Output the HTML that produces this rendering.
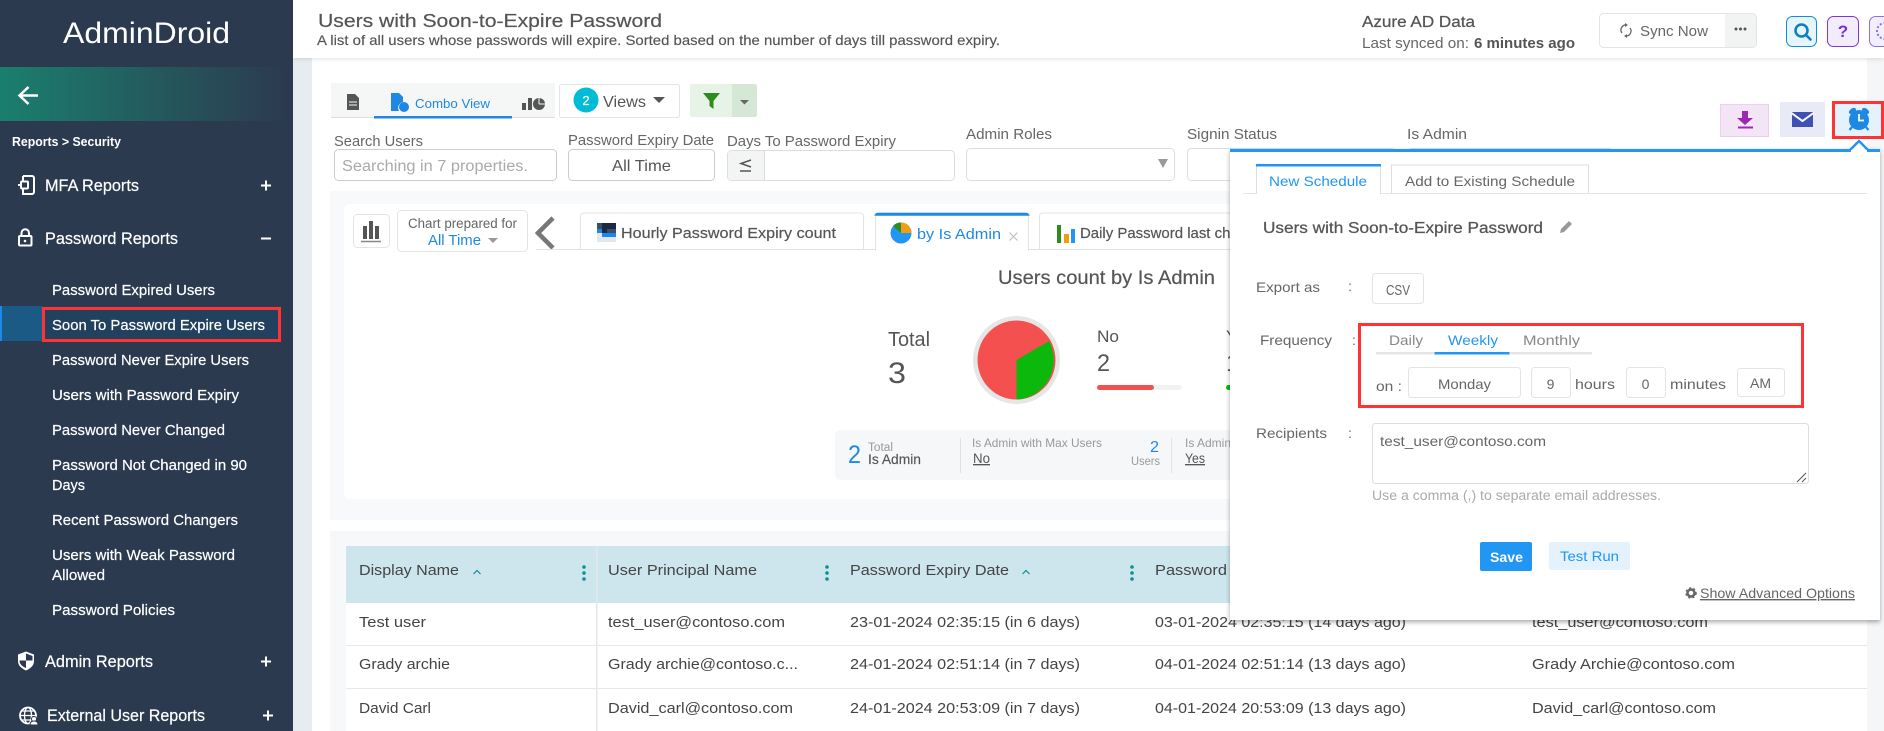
<!DOCTYPE html>
<html lang="en"><head><meta charset="utf-8"><title>Users with Soon-to-Expire Password</title>
<style>
html,body{margin:0;padding:0;background:#fff;width:1884px;height:731px;overflow:hidden}
svg{display:block;font-family:"Liberation Sans",Arial,sans-serif}
text{white-space:pre}
.n{font-size:17px;fill:#fff;stroke:#fff;stroke-width:.2}
.s{font-size:15px;fill:#fff;stroke:#fff;stroke-width:.2}
.l{font-size:15px;fill:#666}
.t{font-size:15px;fill:#444}
.p{font-size:14px;fill:#666}
.b{fill:#2196f3}
.box{fill:#fff;stroke:#e4e4e4;stroke-width:1}
</style></head><body>
<svg width="1884" height="731" viewBox="0 0 1884 731" xmlns="http://www.w3.org/2000/svg">
<defs>
<linearGradient id="g" x1="0" x2="1" y1="0" y2="0"><stop offset="0" stop-color="#1a7f6e"/><stop offset="1" stop-color="#2c3a50"/></linearGradient>
<filter id="sh" x="-5%" y="-5%" width="110%" height="112%"><feDropShadow dx="0" dy="2" stdDeviation="2.5" flood-color="#000" flood-opacity=".35"/></filter>
<filter id="hs" x="-1%" y="-20%" width="102%" height="150%"><feDropShadow dx="0" dy="1" stdDeviation="2" flood-color="#000" flood-opacity=".12"/></filter>
<clipPath id="c1"><rect x="0" y="0" width="1230" height="731"/></clipPath>
</defs>

<!-- page backgrounds -->
<rect width="1884" height="731" fill="#f4f6f8"/>
<rect x="293" y="58" width="19" height="673" fill="#e6ecef"/>
<rect x="312" y="58" width="1555" height="673" fill="#fff"/>
<rect x="293" width="1591" height="58" fill="#fff" filter="url(#hs)"/>

<!-- main header -->
<text x="318" y="27" textLength="344" lengthAdjust="spacingAndGlyphs" font-size="18" fill="#555" stroke="#555" stroke-width=".2">Users with Soon-to-Expire Password</text>
<text x="317" y="45" textLength="683" lengthAdjust="spacingAndGlyphs" font-size="14" fill="#555" stroke="#555" stroke-width=".15">A list of all users whose passwords will expire. Sorted based on the number of days till password expiry.</text>
<text x="1362" y="27" textLength="113" lengthAdjust="spacingAndGlyphs" font-size="15.5" fill="#555" stroke="#555" stroke-width=".25">Azure AD Data</text>
<text x="1362" y="48" textLength="107" lengthAdjust="spacingAndGlyphs" font-size="15" fill="#666">Last synced on:</text>
<text x="1474" y="48" textLength="101" lengthAdjust="spacingAndGlyphs" font-size="15" fill="#555" font-weight="bold">6 minutes ago</text>

<rect x="1599.5" y="13.5" width="157" height="34" rx="4" class="box"/>
<path d="M1725 14h27a4 4 0 0 1 4 4v25a4 4 0 0 1-4 4h-27z" fill="#f2f4f4"/>
<path d="M1622 33a5 5 0 0 1 4.500-8M1630 28a5 5 0 0 1-4.500 8" fill="none" stroke="#666" stroke-width="1.300"/>
<path d="M1625 23l3 2-3 2zM1627 38l-3-2 3-2z" fill="#666"/>
<text x="1640" y="36" textLength="68" lengthAdjust="spacingAndGlyphs" font-size="15" fill="#666">Sync Now</text>
<circle cx="1736" cy="29" r="1.500" fill="#555"/><circle cx="1740.5" cy="29" r="1.500" fill="#555"/><circle cx="1745" cy="29" r="1.500" fill="#555"/>

<rect x="1786.5" y="16.5" width="30" height="30" rx="6" fill="#e6f4fc" stroke="#0b8fd6"/>
<circle cx="1801.5" cy="30.5" r="6" fill="none" stroke="#0b7fc0" stroke-width="2.500"/><path d="M1806 35l4.500 4.500" stroke="#0b7fc0" stroke-width="2.600" stroke-linecap="round"/>
<rect x="1827.5" y="16.5" width="31" height="30" rx="6" fill="#f3ecfc" stroke="#7b35e0"/>
<text x="1843" y="37" text-anchor="middle" font-size="17" font-weight="bold" fill="#7b2fe0">?</text>
<rect x="1869.5" y="16.5" width="31" height="30" rx="6" fill="#f2effc" stroke="#8c6ee8"/>
<circle cx="1885" cy="31" r="8" fill="none" stroke="#8c6ee8" stroke-width="2" stroke-dasharray="2 2"/>

<!-- view tabs -->
<rect x="331" y="83" width="224" height="35" fill="#f5f6f6"/><rect x="331" y="117" width="224" height="1" fill="#ddd"/>
<path d="M347 94h8l4 4v12h-12z" fill="#555"/><path d="M349 102h8M349 105h8" stroke="#f5f6f6"/>
<rect x="374" y="116" width="138" height="2.500" fill="#1e88e5"/>
<path d="M391 93h8l4 4v5a6 6 0 0 0-4 9h-8z" fill="#1e88e5"/><circle cx="404" cy="107" r="5" fill="#1e88e5"/>
<text x="415" y="108" textLength="75" lengthAdjust="spacingAndGlyphs" font-size="13" fill="#1e88e5">Combo View</text>
<path d="M522 103h4v7h-4zM528 98h4v12h-4z" fill="#555"/><circle cx="539" cy="104" r="6" fill="#555"/><path d="M539 104V97M539 104h7" stroke="#f5f6f6"/>

<rect x="559.5" y="84.5" width="120" height="33" rx="2" class="box"/>
<circle cx="586" cy="100" r="12.5" fill="#00bcd4"/><text x="586" y="105" text-anchor="middle" font-size="13" fill="#fff" stroke="#fff" stroke-width=".2">2</text>
<text x="603" y="107" textLength="43" lengthAdjust="spacingAndGlyphs" font-size="16" fill="#555">Views</text>
<path d="M653 97h12l-6 6z" fill="#555"/>
<path d="M692 84h40v33h-40a2 2 0 0 1-2-2v-29a2 2 0 0 1 2-2z" fill="#e8f3e8"/>
<path d="M732 84h23a2 2 0 0 1 2 2v29a2 2 0 0 1-2 2h-23z" fill="#d5e8d5"/>
<path d="M703 93h17l-6.500 8v8l-4-3v-5z" fill="#2e8b1e"/>
<path d="M740 100h9l-4.500 4.500z" fill="#666"/>

<!-- filters -->
<text x="334" y="146" textLength="89" lengthAdjust="spacingAndGlyphs" class="l">Search Users</text>
<rect x="334.5" y="149.5" width="222" height="31" rx="4" fill="#fff" stroke="#ccc"/>
<text x="342" y="171" textLength="186" lengthAdjust="spacingAndGlyphs" font-size="15.5" fill="#aaa">Searching in 7 properties.</text>
<text x="568" y="145" textLength="146" lengthAdjust="spacingAndGlyphs" class="l">Password Expiry Date</text>
<rect x="568.5" y="149.5" width="146" height="31" rx="4" fill="#fff" stroke="#ccc"/>
<text x="612" y="171" textLength="59" lengthAdjust="spacingAndGlyphs" font-size="16" fill="#555">All Time</text>
<text x="727" y="146" textLength="169" lengthAdjust="spacingAndGlyphs" class="l">Days To Password Expiry</text>
<rect x="727.5" y="150.5" width="227" height="30" rx="4" fill="#fff" stroke="#ddd"/>
<path d="M731 151h33v29h-33a3 3 0 0 1-3-3v-23a3 3 0 0 1 3-3z" fill="#f3f5f5"/><path d="M764.5 151v29" stroke="#ddd"/>
<path d="M751 160l-10 3.500 10 3.500" fill="none" stroke="#555" stroke-width="1.500"/><path d="M740 171h11" stroke="#555" stroke-width="1.500"/>
<text x="966" y="139" textLength="86" lengthAdjust="spacingAndGlyphs" class="l">Admin Roles</text>
<rect x="966.5" y="148.5" width="208" height="32" rx="4" fill="#fff" stroke="#ddd"/>
<path d="M1158 159h10l-5 9z" fill="#999"/>
<text x="1187" y="139" textLength="90" lengthAdjust="spacingAndGlyphs" class="l">Signin Status</text>
<rect x="1187.5" y="148.5" width="208" height="32" rx="4" fill="#fff" stroke="#ddd"/>
<text x="1407" y="139" textLength="60" lengthAdjust="spacingAndGlyphs" class="l">Is Admin</text>
<rect x="1407.5" y="148.5" width="205" height="32" rx="4" fill="#fff" stroke="#ddd"/>

<!-- chart section -->
<rect x="330" y="191" width="1537" height="329" fill="#f7f9fb"/>
<rect x="344" y="204" width="1510" height="295" rx="6" fill="#fff"/>
<rect x="353.5" y="214.5" width="36" height="33" rx="4" class="box"/>
<path d="M363 226h4v13h-4zM369 221h4v18h-4zM375 226h4v13h-4z" fill="#555"/><path d="M361 241.5h20" stroke="#888" stroke-width="1.500"/>
<rect x="397.5" y="210.5" width="130" height="41" rx="4" class="box"/>
<text x="408" y="228" textLength="109" lengthAdjust="spacingAndGlyphs" font-size="13.5" fill="#666">Chart prepared for</text>
<text x="428" y="245" textLength="53" lengthAdjust="spacingAndGlyphs" font-size="15" fill="#1e88e5">All Time</text>
<path d="M488 238h10l-5 5z" fill="#999"/>
<path d="M553 218l-15 15 15 15" fill="none" stroke="#777" stroke-width="4.500"/>
<path d="M536 249.5h694" stroke="#e3e3e3"/>
<path d="M580.5 249v-33a3 3 0 0 1 3-3h277a3 3 0 0 1 3 3v33" fill="#fff" stroke="#e4e4e4"/>
<rect x="597" y="223" width="19" height="19" fill="#dfe7ef"/><rect x="597" y="223" width="5" height="6" fill="#39506b"/><rect x="602" y="223" width="14" height="6" fill="#1b2a44"/><rect x="597" y="229" width="5" height="4" fill="#1e88e5"/><rect x="602" y="229" width="5" height="4" fill="#1b2a44"/><rect x="607" y="229" width="9" height="4" fill="#39506b"/><rect x="602" y="233" width="14" height="4" fill="#1e88e5"/>
<text x="621" y="238" textLength="215" lengthAdjust="spacingAndGlyphs" font-size="15" fill="#555" stroke="#555" stroke-width=".2">Hourly Password Expiry count</text>
<path d="M875.5 251v-35a3 3 0 0 1 3-3h147a3 3 0 0 1 3 3v35" fill="#fff" stroke="#e4e4e4"/>
<path d="M878 213.5h148a3 3 0 0 1 2.500 1.500h-153a3 3 0 0 1 2.500-1.500z" fill="#1e88e5" stroke="#1e88e5" stroke-width="1.500"/>
<rect x="876" y="248" width="152" height="4" fill="#fff"/>
<circle cx="901" cy="233" r="10.5" fill="#2196f3"/><path d="M901 233v-10.500a10.500 10.500 0 0 1 10.500 10.500z" fill="#f39c12"/><path d="M901 233l-8-7a10.500 10.500 0 0 1 8-3.500z" fill="#2e8b1e"/>
<text x="917" y="239" textLength="84" lengthAdjust="spacingAndGlyphs" font-size="15" fill="#1e88e5">by Is Admin</text>
<path d="M1009.500 232.500l8 8M1017.500 232.500l-8 8" stroke="#bbb"/>
<g clip-path="url(#c1)">
<path d="M1039.5 249v-33a3 3 0 0 1 3-3h300" fill="#fff" stroke="#e4e4e4"/>
<rect x="1057" y="225" width="4" height="18" fill="#2e8b1e"/><rect x="1064" y="234" width="5" height="9" fill="#f39c12"/><rect x="1071" y="229" width="4" height="14" fill="#2196f3"/>
<text x="1080" y="238" textLength="192" lengthAdjust="spacingAndGlyphs" font-size="15" fill="#555" stroke="#555" stroke-width=".2">Daily Password last changed</text>
</g>

<text x="998" y="284" textLength="217" lengthAdjust="spacingAndGlyphs" font-size="19" fill="#555" stroke="#555" stroke-width=".2">Users count by Is Admin</text>
<text x="888" y="346" textLength="42" lengthAdjust="spacingAndGlyphs" font-size="20" fill="#555">Total</text>
<text x="888" y="383" textLength="18" lengthAdjust="spacingAndGlyphs" font-size="30" fill="#555">3</text>
<ellipse cx="1016.5" cy="360" rx="43.5" ry="44" fill="#e6e6e6"/>
<ellipse cx="1016.5" cy="360" rx="39" ry="39.5" fill="#f55050"/>
<path d="M1016.5 360L1049 341A39 39.500 0 0 1 1016.500 399.500z" fill="#0cb80c"/>
<text x="1097" y="342" textLength="22" lengthAdjust="spacingAndGlyphs" font-size="17" fill="#555">No</text>
<text x="1097" y="371" textLength="13" lengthAdjust="spacingAndGlyphs" font-size="24" fill="#555">2</text>
<rect x="1097" y="385" width="85" height="5" rx="2.5" fill="#f2f2f2"/><rect x="1097" y="385" width="57" height="5" rx="2.5" fill="#f55050"/>
<text x="1226" y="342" font-size="17" fill="#555">Y</text><text x="1226" y="371" font-size="24" fill="#555">1</text>
<rect x="1226" y="385" width="8" height="5" rx="2.5" fill="#0cb80c"/>

<rect x="835" y="430" width="600" height="50" rx="6" fill="#f5f7f9"/>
<text x="848" y="463" textLength="13" lengthAdjust="spacingAndGlyphs" font-size="25" fill="#1e88e5">2</text>
<text x="868" y="451" textLength="25" lengthAdjust="spacingAndGlyphs" font-size="11.5" fill="#999">Total</text>
<text x="868" y="464" textLength="53" lengthAdjust="spacingAndGlyphs" font-size="13.5" fill="#555" stroke="#555" stroke-width=".15">Is Admin</text>
<path d="M960.5 438v35M1171.500 438v35" stroke="#e2e2e2"/>
<text x="972" y="447" textLength="130" lengthAdjust="spacingAndGlyphs" font-size="12" fill="#999">Is Admin with Max Users</text>
<text x="973" y="463" textLength="17" lengthAdjust="spacingAndGlyphs" font-size="13.5" fill="#555" text-decoration="underline">No</text>
<text x="1150" y="452" textLength="9" lengthAdjust="spacingAndGlyphs" font-size="16" fill="#1e88e5">2</text>
<text x="1131" y="465" textLength="29" lengthAdjust="spacingAndGlyphs" font-size="12" fill="#999">Users</text>
<text x="1185" y="447" font-size="12" fill="#999">Is Admin</text>
<text x="1185" y="463" textLength="20" lengthAdjust="spacingAndGlyphs" font-size="13.5" fill="#555" text-decoration="underline">Yes</text>

<!-- table -->
<rect x="330" y="531" width="1537" height="200" fill="#f6f8fa"/>
<rect x="346" y="546" width="1521" height="57" fill="#cde6ee"/>
<rect x="346" y="603" width="1521" height="128" fill="#fff"/>
<path d="M346 645.500h1521M346 688.500h1521" stroke="#e8e8e8"/>
<rect x="596" y="546" width="1.5" height="185" fill="#e4e8ea"/>
<text x="359" y="575" textLength="100" lengthAdjust="spacingAndGlyphs" class="t">Display Name</text>
<path d="M473.500 574l3.500-3.500 3.500 3.500" fill="none" stroke="#0f8f8f" stroke-width="1.200"/>
<text x="608" y="575" textLength="149" lengthAdjust="spacingAndGlyphs" class="t">User Principal Name</text>
<text x="850" y="575" textLength="159" lengthAdjust="spacingAndGlyphs" class="t">Password Expiry Date</text>
<path d="M1022.500 574l3.500-3.500 3.500 3.500" fill="none" stroke="#0f8f8f" stroke-width="1.200"/>
<text x="1155" y="575" textLength="72" lengthAdjust="spacingAndGlyphs" class="t">Password</text>
<g fill="#0f8f8f">
<circle cx="584" cy="567" r="1.8"/><circle cx="584" cy="573" r="1.8"/><circle cx="584" cy="579" r="1.8"/>
<circle cx="827" cy="567" r="1.8"/><circle cx="827" cy="573" r="1.8"/><circle cx="827" cy="579" r="1.8"/>
<circle cx="1132" cy="567" r="1.8"/><circle cx="1132" cy="573" r="1.8"/><circle cx="1132" cy="579" r="1.8"/>
</g>
<text x="359" y="627" textLength="67" lengthAdjust="spacingAndGlyphs" class="t">Test user</text>
<text x="608" y="627" textLength="177" lengthAdjust="spacingAndGlyphs" class="t">test_user@contoso.com</text>
<text x="850" y="627" textLength="230" lengthAdjust="spacingAndGlyphs" class="t">23-01-2024 02:35:15 (in 6 days)</text>
<text x="1155" y="627" textLength="251" lengthAdjust="spacingAndGlyphs" class="t">03-01-2024 02:35:15 (14 days ago)</text>
<text x="1532" y="627" textLength="176" lengthAdjust="spacingAndGlyphs" class="t">test_user@contoso.com</text>
<text x="359" y="669" textLength="91" lengthAdjust="spacingAndGlyphs" class="t">Grady archie</text>
<text x="608" y="669" textLength="190" lengthAdjust="spacingAndGlyphs" class="t">Grady archie@contoso.c...</text>
<text x="850" y="669" textLength="230" lengthAdjust="spacingAndGlyphs" class="t">24-01-2024 02:51:14 (in 7 days)</text>
<text x="1155" y="669" textLength="251" lengthAdjust="spacingAndGlyphs" class="t">04-01-2024 02:51:14 (13 days ago)</text>
<text x="1532" y="669" textLength="203" lengthAdjust="spacingAndGlyphs" class="t">Grady Archie@contoso.com</text>
<text x="359" y="713" textLength="72" lengthAdjust="spacingAndGlyphs" class="t">David Carl</text>
<text x="608" y="713" textLength="185" lengthAdjust="spacingAndGlyphs" class="t">David_carl@contoso.com</text>
<text x="850" y="713" textLength="230" lengthAdjust="spacingAndGlyphs" class="t">24-01-2024 20:53:09 (in 7 days)</text>
<text x="1155" y="713" textLength="251" lengthAdjust="spacingAndGlyphs" class="t">04-01-2024 20:53:09 (13 days ago)</text>
<text x="1532" y="713" textLength="184" lengthAdjust="spacingAndGlyphs" class="t">David_carl@contoso.com</text>

<!-- action buttons -->
<rect x="1720.5" y="104.5" width="48" height="32" fill="#f3e5f6" stroke="#f0cdee"/>
<path d="M1742 111h6v7h5l-8 7-8-7h5z" fill="#9c27b0"/><rect x="1738" y="126.5" width="15" height="2" fill="#9c27b0"/>
<rect x="1780" y="102" width="45" height="35" fill="#e8eaf6"/>
<rect x="1792" y="112" width="21" height="15" fill="#3f51b5"/><path d="M1791.500 113l11 8 11-8" fill="none" stroke="#fff" stroke-width="2"/>

<!-- popover -->
<rect x="1230" y="149" width="650" height="471" fill="#fff" filter="url(#sh)"/>
<rect x="1230" y="149" width="650" height="3" fill="#2196f3"/>
<path d="M1849 151l10-10 10 10" fill="#fff" stroke="#2196f3" stroke-width="2.5"/><rect x="1851" y="150" width="16" height="3" fill="#fff"/>
<rect x="1833.5" y="102.5" width="49" height="35" fill="#e3f2fd" stroke="#f33" stroke-width="3"/>
<circle cx="1859" cy="120" r="10" fill="#1e88e5"/>
<path d="M1859 114v6.500h5" fill="none" stroke="#fff" stroke-width="1.800"/>
<ellipse cx="1852.5" cy="111" rx="4" ry="2.5" transform="rotate(-35 1852.500 111)" fill="#1e88e5"/>
<ellipse cx="1865.5" cy="111" rx="4" ry="2.5" transform="rotate(35 1865.500 111)" fill="#1e88e5"/>
<path d="M1852 127l-2.500 3M1866 127l2.500 3" stroke="#1e88e5" stroke-width="2.2"/>

<path d="M1243 193.500h624" stroke="#e5e5e5"/>
<path d="M1256.5 194v-29h124v29" fill="#fff" stroke="#ddd"/><rect x="1256" y="164" width="125" height="2.5" fill="#2196f3"/><rect x="1257" y="192" width="123" height="3" fill="#fff"/>
<text x="1269" y="186" textLength="98" lengthAdjust="spacingAndGlyphs" font-size="14" fill="#2196f3">New Schedule</text>
<path d="M1391.5 193v-28h197v28" fill="#fff" stroke="#ddd"/>
<text x="1405" y="186" textLength="170" lengthAdjust="spacingAndGlyphs" class="p">Add to Existing Schedule</text>
<text x="1263" y="233" textLength="280" lengthAdjust="spacingAndGlyphs" font-size="15.5" fill="#555" stroke="#555" stroke-width=".25">Users with Soon-to-Expire Password</text>
<path d="M1560 233l1-4 8-8 3 3-8 8z" fill="#999"/>

<text x="1256" y="292" textLength="64" lengthAdjust="spacingAndGlyphs" class="p">Export as</text>
<text x="1348" y="291" class="p">:</text>
<rect x="1372.5" y="273.5" width="51" height="30" rx="3" class="box"/>
<text x="1386" y="295" textLength="24" lengthAdjust="spacingAndGlyphs" font-size="15" fill="#666">CSV</text>

<text x="1260" y="345" textLength="72" lengthAdjust="spacingAndGlyphs" class="p">Frequency</text>
<text x="1352" y="345" class="p">:</text>
<text x="1389" y="345" textLength="34" lengthAdjust="spacingAndGlyphs" font-size="14" fill="#888">Daily</text>
<text x="1448" y="345" textLength="50" lengthAdjust="spacingAndGlyphs" font-size="14" fill="#2196f3">Weekly</text>
<text x="1523" y="345" textLength="57" lengthAdjust="spacingAndGlyphs" font-size="14" fill="#888">Monthly</text>
<rect x="1376" y="352" width="216" height="2.5" fill="#e5e5e5"/><rect x="1434.5" y="352" width="75" height="2.5" fill="#2196f3"/>
<text x="1376" y="391" textLength="26" lengthAdjust="spacingAndGlyphs" class="p">on :</text>
<rect x="1408.5" y="367.5" width="112" height="30" rx="3" class="box"/>
<text x="1438" y="389" textLength="53" lengthAdjust="spacingAndGlyphs" class="p">Monday</text>
<rect x="1531.5" y="367.5" width="39" height="30" rx="3" class="box"/>
<text x="1550.5" y="389" text-anchor="middle" class="p">9</text>
<text x="1575" y="389" textLength="40" lengthAdjust="spacingAndGlyphs" class="p">hours</text>
<rect x="1626.5" y="367.5" width="39" height="30" rx="3" class="box"/>
<text x="1645.5" y="389" text-anchor="middle" class="p">0</text>
<text x="1670" y="389" textLength="56" lengthAdjust="spacingAndGlyphs" class="p">minutes</text>
<rect x="1737.5" y="368.5" width="47" height="28" rx="3" class="box"/>
<text x="1750" y="388" textLength="21" lengthAdjust="spacingAndGlyphs" class="p">AM</text>
<rect x="1359.5" y="324.5" width="443" height="82" fill="none" stroke="#f33" stroke-width="3"/>

<text x="1256" y="438" textLength="71" lengthAdjust="spacingAndGlyphs" class="p">Recipients</text>
<text x="1348" y="438" class="p">:</text>
<rect x="1372.5" y="423.5" width="436" height="60" rx="3" fill="#fff" stroke="#ddd"/>
<text x="1380" y="446" textLength="166" lengthAdjust="spacingAndGlyphs" class="p">test_user@contoso.com</text>
<path d="M1797 482l9-9M1802 482l4-4" stroke="#555"/>
<text x="1372" y="500" textLength="289" lengthAdjust="spacingAndGlyphs" font-size="13.5" fill="#aaa">Use a comma (,) to separate email addresses.</text>
<rect x="1480" y="542" width="52" height="29" rx="2" fill="#2196f3"/>
<text x="1490" y="562" textLength="33" lengthAdjust="spacingAndGlyphs" font-size="14" font-weight="bold" fill="#fff">Save</text>
<rect x="1549" y="542" width="81" height="28" rx="2" fill="#e3f2fd"/>
<text x="1560" y="561" textLength="59" lengthAdjust="spacingAndGlyphs" font-size="14" fill="#2196f3">Test Run</text>
<circle cx="1691" cy="593" r="3.5" fill="none" stroke="#666" stroke-width="2.5"/><circle cx="1691" cy="593" r="5" fill="none" stroke="#666" stroke-width="1.5" stroke-dasharray="2 2.300"/>
<text x="1700" y="598" textLength="155" lengthAdjust="spacingAndGlyphs" class="p" text-decoration="underline">Show Advanced Options</text>

<!-- sidebar -->
<rect x="0" y="0" width="293" height="731" fill="#2c3a50"/>
<text x="63" y="43" textLength="167" lengthAdjust="spacingAndGlyphs" font-size="30" fill="#fff">AdminDroid</text>
<rect x="0" y="67" width="285" height="54" fill="url(#g)"/>
<path d="M38 95.500H20M28.500 87l-9 8.500 9 8.500" fill="none" stroke="#fff" stroke-width="2.5"/>
<text x="12" y="146" textLength="109" lengthAdjust="spacingAndGlyphs" font-size="13" font-weight="bold" fill="#fff">Reports &gt; Security</text>

<path d="M23 176h9a2 2 0 0 1 2 2v14a2 2 0 0 1-2 2h-9v-5M23 181v-5" fill="none" stroke="#fff" stroke-width="2"/>
<path d="M18 185h4" stroke="#fff" stroke-width="2"/><rect x="21" y="181.5" width="7" height="7" rx="1" fill="none" stroke="#fff" stroke-width="2"/>
<text x="45" y="191" textLength="94" lengthAdjust="spacingAndGlyphs" class="n">MFA Reports</text>
<path d="M261 185.500h10M266 180.500v10" stroke="#fff" stroke-width="2"/>

<rect x="19" y="236" width="12.5" height="9.5" rx="1" fill="none" stroke="#fff" stroke-width="2"/><path d="M21.500 236v-3a3.700 3.700 0 0 1 7.500 0v3" fill="none" stroke="#fff" stroke-width="2"/><circle cx="25" cy="241" r="1.3" fill="#fff"/>
<text x="45" y="244" textLength="133" lengthAdjust="spacingAndGlyphs" class="n">Password Reports</text>
<path d="M261 238.500h10" stroke="#fff" stroke-width="2"/>

<text x="52" y="295" textLength="163" lengthAdjust="spacingAndGlyphs" class="s">Password Expired Users</text>
<rect x="0" y="306" width="42" height="35" fill="#1a5a85"/><rect x="42" y="306" width="239" height="36" fill="#22415f"/><rect x="0" y="306" width="2" height="35" fill="#1e88e5"/>
<rect x="43.5" y="308.5" width="236" height="32" fill="none" stroke="#f33" stroke-width="3"/>
<text x="52" y="330" textLength="213" lengthAdjust="spacingAndGlyphs" class="s">Soon To Password Expire Users</text>
<text x="52" y="365" textLength="197" lengthAdjust="spacingAndGlyphs" class="s">Password Never Expire Users</text>
<text x="52" y="400" textLength="187" lengthAdjust="spacingAndGlyphs" class="s">Users with Password Expiry</text>
<text x="52" y="435" textLength="173" lengthAdjust="spacingAndGlyphs" class="s">Password Never Changed</text>
<text x="52" y="470" textLength="195" lengthAdjust="spacingAndGlyphs" class="s">Password Not Changed in 90</text>
<text x="52" y="490" textLength="33" lengthAdjust="spacingAndGlyphs" class="s">Days</text>
<text x="52" y="525" textLength="186" lengthAdjust="spacingAndGlyphs" class="s">Recent Password Changers</text>
<text x="52" y="560" textLength="183" lengthAdjust="spacingAndGlyphs" class="s">Users with Weak Password</text>
<text x="52" y="580" textLength="53" lengthAdjust="spacingAndGlyphs" class="s">Allowed</text>
<text x="52" y="615" textLength="123" lengthAdjust="spacingAndGlyphs" class="s">Password Policies</text>

<path d="M26 651.500l8 3v6.500c0 4.500-3.500 7.500-8 9.500-4.500-2-8-5-8-9.500v-6.500z" fill="#fff"/>
<path d="M26 653.500v7h-6.500v-4.500zM26 660.500h6.500c0 3.500-2.700 6-6.500 7.500z" fill="#2c3a50" transform="matrix(-1 0 0 1 52 0)"/>
<text x="45" y="667" textLength="108" lengthAdjust="spacingAndGlyphs" class="n">Admin Reports</text>
<path d="M261 661.500h10M266 656.500v10" stroke="#fff" stroke-width="2"/>

<circle cx="28" cy="715.5" r="8" fill="none" stroke="#fff" stroke-width="1.8"/><ellipse cx="28" cy="715.5" rx="3.5" ry="8" fill="none" stroke="#fff" stroke-width="1.3"/><path d="M20 715.500h16M21.500 711h13M21.500 720h13" stroke="#fff" stroke-width="1.200"/>
<circle cx="34" cy="719" r="2.5" fill="#fff" stroke="#2c3a50"/><path d="M30 725c0-3 2-4 4-4s4 1 4 4z" fill="#fff" stroke="#2c3a50"/>
<text x="47" y="721" textLength="158" lengthAdjust="spacingAndGlyphs" class="n">External User Reports</text>
<path d="M263 715.500h10M268 710.500v10" stroke="#fff" stroke-width="2"/>
</svg>
</body></html>
